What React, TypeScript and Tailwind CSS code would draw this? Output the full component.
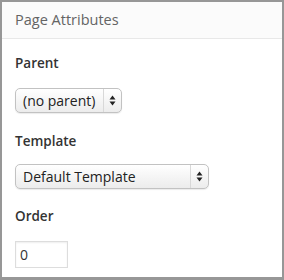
const Arrows = () => (
  <svg width="7" height="11" viewBox="0 0 7 11" className="shrink-0">
    <path d="M3.5 0.5 L6.5 4.5 L0.5 4.5 Z" fill="#222" />
    <path d="M3.5 10.5 L6.5 6.5 L0.5 6.5 Z" fill="#222" />
  </svg>
);

const FakeSelect = ({ label, width }: { label: string; width: string }) => (
  <div
    className={`flex h-[25px] ${width} items-center rounded-[5px] border border-[#c2c2c2] bg-gradient-to-b from-white to-[#ececec] shadow-[0_1px_1px_rgba(0,0,0,0.08)]`}
  >
    <span className="flex-1 pl-[7px] text-[14px] leading-none text-[#222]">{label}</span>
    <div className="flex h-full w-[18px] items-center justify-center border-l border-[#d8d8d8]">
      <Arrows />
    </div>
  </div>
);

export default function App() {
  return (
    <div
      className="h-[280px] w-[284px] border-2 border-b-[3px] border-[#979797] bg-white"
      style={{ fontFamily: '"Open Sans", "Liberation Sans", sans-serif' }}
    >
      {/* header */}
      <div className="flex h-[37px] items-center border-b border-[#e8e8e8] bg-[#fbfbfb] pl-[13px]">
        <h3 className="text-[14.5px] font-normal text-[#646464]">Page Attributes</h3>
      </div>

      <div className="pl-[13px]">
        <p className="mt-[15px] text-[13.5px] font-semibold leading-[18px] text-[#333]">Parent</p>
        <div className="mt-[16px]">
          <FakeSelect label="(no parent)" width="w-[107px]" />
        </div>

        <p className="mt-[19px] text-[13.5px] font-semibold leading-[18px] text-[#333]">Template</p>
        <div className="mt-[14px]">
          <FakeSelect label="Default Template" width="w-[194px]" />
        </div>

        <p className="mt-[18px] text-[13.5px] font-semibold leading-[18px] text-[#333]">Order</p>
        <div className="mt-[16px] flex h-[27px] w-[53px] items-center border border-[#dddddd] bg-white pl-[4px] text-[14px] text-[#333] shadow-[inset_0_1px_2px_rgba(0,0,0,0.07)]">
          0
        </div>
      </div>
    </div>
  );
}
